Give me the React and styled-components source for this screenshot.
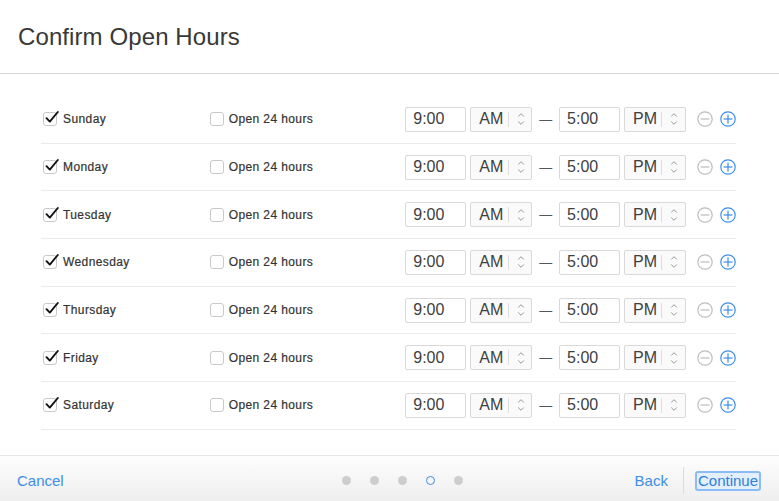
import React from "react";
import styled, { createGlobalStyle } from "styled-components";

const GlobalStyle = createGlobalStyle`
  html, body {
    margin: 0;
    padding: 0;
    background: #fff;
    font-family: "Liberation Sans", Arial, sans-serif;
  }
`;

const Dialog = styled.div`
  width: 779px;
  height: 501px;
  display: flex;
  flex-direction: column;
  background: #fff;
  overflow: hidden;
`;

const Header = styled.div`
  height: 73px;
  display: flex;
  align-items: center;
  padding-left: 18px;
  border-bottom: 1px solid #d6d6d6;
`;

const Title = styled.h1`
  margin: 0;
  font-size: 24px;
  font-weight: 400;
  color: #383838;
  letter-spacing: 0.1px;
`;

const Body = styled.div`
  flex: 1;
  padding: 22px 43px 0 41px;
`;

const Row = styled.div`
  height: 46.7px;
  display: flex;
  align-items: center;
  padding-left: 2px;
  border-bottom: 1px solid #ebebeb;
`;

const DayCell = styled.label`
  width: 167px;
  display: flex;
  align-items: center;
  gap: 6px;
`;

const OpenCell = styled.label`
  width: 196px;
  display: flex;
  align-items: center;
  gap: 5px;
`;

const Label = styled.span`
  font-size: 12px;
  font-weight: 400;
  letter-spacing: 0.4px;
  color: #333;
  -webkit-text-stroke: 0.2px #333;
`;

const Box = styled.span`
  position: relative;
  width: 14px;
  height: 14px;
  box-sizing: border-box;
  border: 1px solid #c9c9c9;
  border-radius: 3px;
  background: #fff;
  flex-shrink: 0;

  svg {
    position: absolute;
    left: 1px;
    top: -3px;
  }
`;

const TimeInput = styled.input`
  width: 61px;
  height: 25px;
  box-sizing: border-box;
  border: 1px solid #d9d9d9;
  border-radius: 2px;
  padding: 0 0 0 7px;
  font-family: inherit;
  font-size: 16px;
  color: #404040;
  background: #fff;
  outline: none;
`;

const Select = styled.div`
  width: 62px;
  height: 25px;
  box-sizing: border-box;
  margin-left: 4px;
  border: 1px solid #d9d9d9;
  border-radius: 2px;
  background: #fafafa;
  display: flex;
  align-items: center;
  padding-left: 8px;
  font-size: 16px;
  color: #404040;
`;

const SelectDivider = styled.span`
  width: 1px;
  height: 15px;
  background: #dedede;
  margin-left: ${(p) => p.$gap}px;
  margin-right: 8px;
`;

const Dash = styled.span`
  width: 27px;
  text-align: center;
  font-size: 13px;
  color: #555;
`;

const Actions = styled.div`
  display: flex;
  align-items: center;
  gap: 7px;
  margin-left: 11px;
`;

const Footer = styled.div`
  height: 46px;
  box-sizing: border-box;
  border-top: 1px solid #e6e6e6;
  background: linear-gradient(#fefefe, #eeeeee);
  display: grid;
  grid-template-columns: 1fr auto 1fr;
  align-items: center;
  padding: 4px 18px 0 17px;
`;

const LinkButton = styled.button`
  border: none;
  background: none;
  padding: 0;
  font-family: inherit;
  font-size: 15px;
  color: #3d8ee8;
  cursor: pointer;
`;

const FocusButton = styled(LinkButton)`
  height: 20px;
  padding: 0 1px;
  box-sizing: border-box;
  border: 2px solid #8bbcf4;
  border-radius: 3px;
  background: #e3effd;
  line-height: 16px;
  color: #2f7fdc;
`;

const Dots = styled.div`
  display: flex;
  align-items: center;
  gap: 19px;
  margin-left: 27px;
`;

const Dot = styled.span`
  width: 9px;
  height: 9px;
  box-sizing: border-box;
  border-radius: 50%;
  background: ${(p) => (p.$active ? "transparent" : "#cdcdcd")};
  border: ${(p) => (p.$active ? "1.5px solid #3d8ee8" : "none")};
`;

const RightGroup = styled.div`
  display: flex;
  align-items: center;
  justify-content: flex-end;
`;

const Separator = styled.span`
  width: 1px;
  height: 27px;
  background: #dcdcdc;
  margin: 0 11px 0 15px;
`;

const Check = () => (
  <svg width="14" height="14" viewBox="0 0 14 14">
    <path d="M1.5 8.2 L4.8 11.6 L12.8 2" fill="none" stroke="#111" strokeWidth="1.9" strokeLinecap="round" strokeLinejoin="round" />
  </svg>
);

const Checkbox = ({ checked }) => <Box>{checked && <Check />}</Box>;

const Chevrons = () => (
  <svg width="8" height="18" viewBox="0 0 8 18">
    <path d="M1.2 6.5 L4 3.7 L6.8 6.5" fill="none" stroke="#999" strokeWidth="1" />
    <path d="M1.2 11.5 L4 14.3 L6.8 11.5" fill="none" stroke="#999" strokeWidth="1" />
  </svg>
);

const CircleIcon = ({ plus }) => {
  const color = plus ? "#3d8ee8" : "#bdbdbd";
  return (
    <svg width="16" height="16" viewBox="0 0 16 16">
      <circle cx="8" cy="8" r="7.2" fill="none" stroke={color} strokeWidth="1.2" />
      <path d="M3.5 8 H12.5" stroke={color} strokeWidth="1.2" />
      {plus && <path d="M8 3.5 V12.5" stroke={color} strokeWidth="1.2" />}
    </svg>
  );
};

const Meridiem = ({ value }) => (
  <Select>
    <span>{value}</span>
    <SelectDivider $gap={value === "AM" ? 5 : 4} />
    <Chevrons />
  </Select>
);

const days = ["Sunday", "Monday", "Tuesday", "Wednesday", "Thursday", "Friday", "Saturday"];

export default function App() {
  return (
    <>
      <GlobalStyle />
      <Dialog>
        <Header>
          <Title>Confirm Open Hours</Title>
        </Header>
        <Body>
          {days.map((day) => (
            <Row key={day}>
              <DayCell>
                <Checkbox checked />
                <Label>{day}</Label>
              </DayCell>
              <OpenCell>
                <Checkbox />
                <Label>Open 24 hours</Label>
              </OpenCell>
              <TimeInput defaultValue="9:00" />
              <Meridiem value="AM" />
              <Dash>—</Dash>
              <TimeInput defaultValue="5:00" />
              <Meridiem value="PM" />
              <Actions>
                <CircleIcon />
                <CircleIcon plus />
              </Actions>
            </Row>
          ))}
        </Body>
        <Footer>
          <div>
            <LinkButton>Cancel</LinkButton>
          </div>
          <Dots>
            <Dot />
            <Dot />
            <Dot />
            <Dot $active />
            <Dot />
          </Dots>
          <RightGroup>
            <LinkButton>Back</LinkButton>
            <Separator />
            <FocusButton>Continue</FocusButton>
          </RightGroup>
        </Footer>
      </Dialog>
    </>
  );
}
